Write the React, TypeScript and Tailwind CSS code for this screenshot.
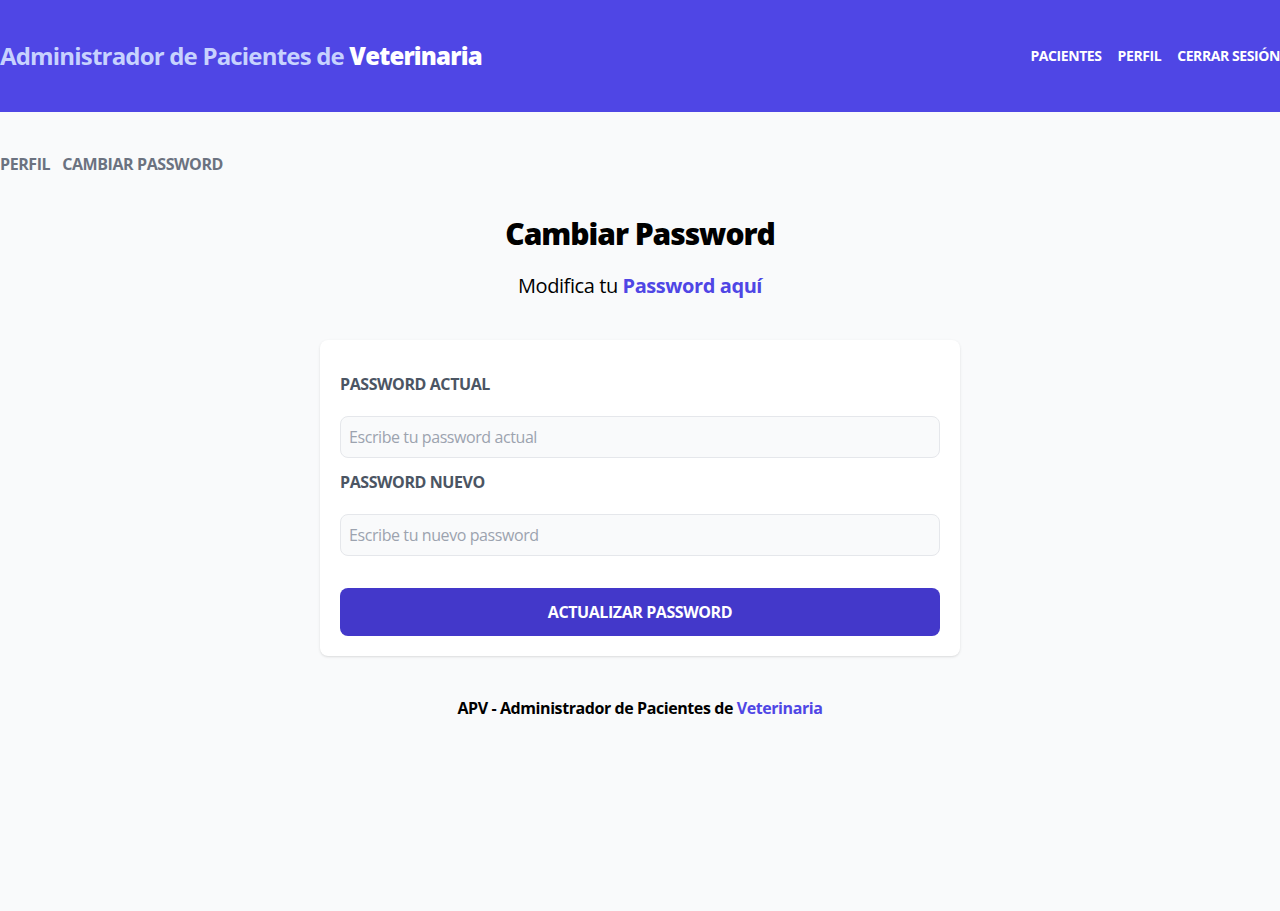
export default function App() {
  return (
    <div className="min-h-screen bg-[#f9fafb] font-['Open_Sans',sans-serif] tracking-[-0.026em] text-black">
      <header className="py-10 bg-[#4f46e5]">
        <div className="flex items-center justify-between">
          <h1 className="font-bold text-2xl text-[#c7d2fe] tracking-[-0.034em]">
            Administrador de Pacientes de <span className="text-white font-black">Veterinaria</span>
          </h1>
          <nav className="flex gap-4">
            <a href="#" className="text-white text-sm uppercase font-bold">Pacientes</a>
            <a href="#" className="text-white text-sm uppercase font-bold">Perfil</a>
            <button type="button" className="text-white text-sm uppercase font-bold">Cerrar Sesión</button>
          </nav>
        </div>
      </header>

      <main className="mt-10">
        <nav className="flex gap-3">
          <a href="#" className="font-bold uppercase text-[#6b7280]">Perfil</a>
          <a href="#" className="font-bold uppercase text-[#6b7280]">Cambiar Password</a>
        </nav>

        <h2 className="font-black text-3xl text-center mt-10 tracking-[-0.035em]">Cambiar Password</h2>
        <p className="text-xl mt-5 mb-10 text-center">
          Modifica tu <span className="text-[#4f46e5] font-bold">Password aquí</span>
        </p>

        <div className="flex justify-center">
          <div className="w-1/2 bg-white shadow rounded-lg p-5">
            <form>
              <div className="my-3">
                <label className="uppercase font-bold text-[#4b5563]">Password Actual</label>
                <input
                  type="password"
                  className="border border-[#e5e7eb] bg-[#f9fafb] w-full p-2 mt-5 rounded-lg placeholder:text-[#9ca3af]"
                  placeholder="Escribe tu password actual"
                />
              </div>
              <div className="my-3">
                <label className="uppercase font-bold text-[#4b5563]">Password Nuevo</label>
                <input
                  type="password"
                  className="border border-[#e5e7eb] bg-[#f9fafb] w-full p-2 mt-5 rounded-lg placeholder:text-[#9ca3af]"
                  placeholder="Escribe tu nuevo password"
                />
              </div>
              <button
                type="button"
                className="bg-[#4338ca] px-10 py-3 font-bold text-white rounded-lg uppercase w-full mt-5"
              >
                Actualizar Password
              </button>
            </form>
          </div>
        </div>
      </main>

      <footer className="py-10">
        <p className="text-center font-bold">
          APV - Administrador de Pacientes de <span className="text-[#4f46e5]">Veterinaria</span>
        </p>
      </footer>
    </div>
  );
}
